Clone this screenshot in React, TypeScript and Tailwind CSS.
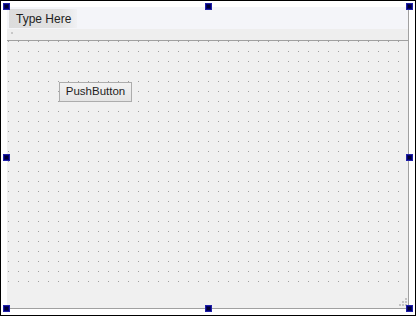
import React from "react";

const handles = [
  "left-[2px] top-[2px]",
  "left-[204px] top-[2px]",
  "left-[405px] top-[2px]",
  "left-[2px] top-[153px]",
  "left-[405px] top-[153px]",
  "left-[2px] top-[304px]",
  "left-[204px] top-[304px]",
  "left-[405px] top-[304px]",
];

const grip = [
  "left-[6px] top-[0px]",
  "left-[3px] top-[3px]",
  "left-[6px] top-[3px]",
  "left-[0px] top-[6px]",
  "left-[3px] top-[6px]",
  "left-[6px] top-[6px]",
];

export default function App() {
  return (
    <div className="relative w-[416px] h-[316px] border border-black bg-white font-['Liberation_Sans',Arial,sans-serif] text-[12px] text-[#1e1e1e]">
      <div className="ml-[6px] mt-[6px] w-[402px] h-[302px] flex flex-col bg-[#f0f0f0] border-r border-b border-[#a0a0a0]">
        {/* menu bar */}
        <div className="h-[22px] bg-[#f4f5f9] pl-[2px] pt-[2px]">
          <div className="w-[68px] h-[19px] flex items-center pl-[7px] text-[12px] bg-[linear-gradient(90deg,#dcdcdc,#e2e2e2_75%,#f0f1f4)]">
            Type Here
          </div>
        </div>
        <div className="h-[11px] bg-[#eeeeee] relative">
          <div className="absolute left-[4px] top-[3px] w-[2px] h-[2px] bg-[#c8c8c8]" />
        </div>
        <div className="h-px bg-[#a0a0a0]" />
        {/* central widget */}
        <div className="relative flex-1">
          <svg className="absolute inset-0 w-full h-full">
            <defs>
              <pattern id="dots" x="1" y="0" width="10" height="10" patternUnits="userSpaceOnUse">
                <rect width="1" height="1" fill="#a0a0a0" />
              </pattern>
            </defs>
            <rect width="100%" height="100%" fill="url(#dots)" />
          </svg>
          <button className="absolute left-[52px] top-[41px] w-[73px] h-[20px] border border-[#acacac] bg-[linear-gradient(#f2f2f2,#e4e4e4)] text-[11.5px] leading-none text-[#1e1e1e]">
            PushButton
          </button>
        </div>
        {/* status bar */}
        <div className="relative h-[19px]">
          <div className="absolute right-[1px] bottom-[2px] w-[8px] h-[8px]">
            {grip.map((g) => (
              <div key={g} className={`absolute ${g} w-[2px] h-[2px] bg-[#c4c4c4]`} />
            ))}
          </div>
        </div>
      </div>
      {handles.map((h) => (
        <div key={h} className={`absolute ${h} w-[7px] h-[7px] bg-[#00006e] border border-[#2020a8] flex items-center justify-center`}>
          <div className="w-[3px] h-[3px] bg-[#000030]" />
        </div>
      ))}
    </div>
  );
}
